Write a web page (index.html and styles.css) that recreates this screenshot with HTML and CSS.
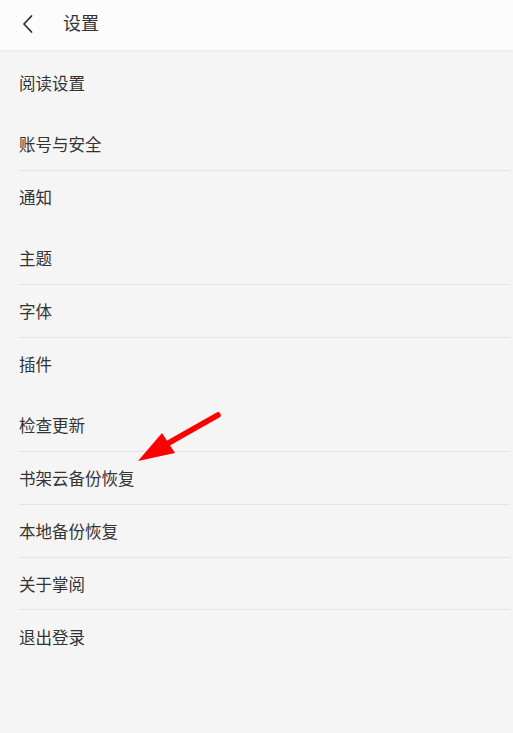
FILE: index.html
```html
<!DOCTYPE html>
<html lang="zh-CN">
<head>
<meta charset="utf-8">
<title>设置</title>
<link rel="stylesheet" href="styles.css">
</head>
<body>
<div class="page">
  <header class="topbar">
    <svg class="back" width="14" height="20" viewBox="0 0 14 20"><path d="M10.5 2 L3 10 L10.5 18" fill="none" stroke="#333" stroke-width="1.8" stroke-linecap="round" stroke-linejoin="round"/></svg>
    <h1 class="title">设置</h1>
  </header>
  <main class="list">
    <section class="group g1">
      <div class="row">阅读设置</div>
    </section>
    <section class="group">
      <div class="row">账号与安全</div>
      <div class="row">通知</div>
    </section>
    <section class="group">
      <div class="row">主题</div>
      <div class="row">字体</div>
      <div class="row">插件</div>
    </section>
    <section class="group">
      <div class="row">检查更新</div>
      <div class="row">书架云备份恢复</div>
      <div class="row">本地备份恢复</div>
      <div class="row">关于掌阅</div>
      <div class="row">退出登录</div>
    </section>
  </main>
  <svg class="arrow" width="513" height="733" viewBox="0 0 513 733">
    <line x1="218" y1="415" x2="165" y2="445" stroke="#ff0000" stroke-width="5.5" stroke-linecap="round"/>
    <polygon points="138,461 162,433 175,453" fill="#ff0000"/>
  </svg>
</div>
</body>
</html>
```

FILE: styles.css
```css
html, body {
  margin: 0;
  padding: 0;
  background: #f5f5f5;
}
.page {
  position: relative;
  width: 513px;
  height: 733px;
  overflow: hidden;
  background: #f5f5f5;
  font-family: "Noto Sans CJK SC", "Noto Sans", sans-serif;
  color: #333333;
}
.topbar {
  height: 50px;
  background: #fcfcfc;
  display: flex;
  align-items: center;
  box-shadow: 0 1px 3px rgba(0, 0, 0, 0.06);
  position: relative;
  z-index: 1;
}
.back {
  margin-left: 21px;
  margin-bottom: 2px;
}
.title {
  margin: 0 0 7px 28px;
  font-size: 18px;
  font-weight: normal;
  color: #333333;
  line-height: 1;
}
.list {
  display: flex;
  flex-direction: column;
}
.group {
  margin-top: 9px;
}
.group.g1 {
  margin-top: 6.5px;
}
.row {
  box-sizing: border-box;
  height: 52.7px;
  margin-left: 19px;
  margin-right: 3px;
  display: flex;
  align-items: center;
  font-size: 16.5px;
  border-bottom: 1px solid #e3e3e3;
}
.row:last-child {
  border-bottom: none;
}
.arrow {
  position: absolute;
  left: 0;
  top: 0;
  pointer-events: none;
}
```
